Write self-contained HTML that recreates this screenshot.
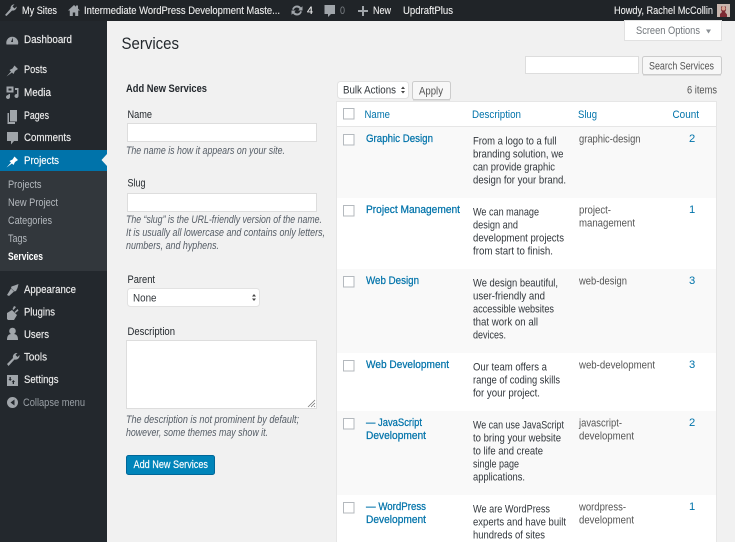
<!DOCTYPE html>
<html><head><meta charset="utf-8"><title>Services</title>
<style>
html,body{margin:0;padding:0;width:735px;height:542px;overflow:hidden;background:#f1f1f1}
svg{display:block;filter:blur(.3px)}
text{font-family:"Liberation Sans",sans-serif;font-size:11.2px;fill:#444}
.b{fill:#eee;font-size:11.2px;stroke:#eee;stroke-width:.12}
.m{fill:#eee;font-size:11.2px;stroke:#eee;stroke-width:.15}
.s{fill:#b4b9be;font-size:11px}
.h{fill:#0073aa;font-size:11.2px}
.n{fill:#0073aa;font-size:11.2px;stroke:#0073aa;stroke-width:.25}
.d{fill:#32373c;font-size:11.2px}
.sl{fill:#555;font-size:11.2px}
.l{fill:#23282d;font-size:11.2px}
.i{fill:#555d66;font-size:11px;font-style:italic}
.g{fill:#a0a5aa}
</style></head><body>
<svg width="735" height="542" viewBox="0 0 735 542" xmlns="http://www.w3.org/2000/svg">
<rect width="735" height="542" fill="#f1f1f1"/>
<rect width="107" height="542" fill="#23282d"/>
<rect y="171" width="107" height="100" fill="#32373c"/>
<rect y="150" width="107" height="21" fill="#0073aa"/>
<path d="M107 154l-5.500 6 5.500 6z" fill="#f1f1f1"/>
<rect width="735" height="21" fill="#202428"/>

<g class="g">
<path d="M5 15l5.500-6.200a4 4 0 0 1 4-4.600l-2 2.300 2 2 2.300-2a4 4 0 0 1-4.700 4l-5.600 5.500z"/>
<path d="M68 10.500l6-5.500 2 1.800V5.500h2v3.100l2 1.900h-1.800V16h-3v-3.500h-2.400V16h-3v-5.500z"/>
<path d="M297 5.500a5 5 0 0 1 4 2l1.500-1.300v4.300h-4.300l1.400-1.500a3.200 3.200 0 0 0-5.800.9l-1.700-.4a5 5 0 0 1 4.900-4zM297 15.500a5 5 0 0 1-4-2l-1.500 1.300v-4.300h4.300l-1.400 1.500a3.200 3.200 0 0 0 5.800-.9l1.700.4a5 5 0 0 1-4.900 4z"/>
<path d="M324.500 5h10.500v9h-4l-3 3v-3h-3.500z"/>
<path d="M362 6h2v4h4v2h-4v4h-2v-4h-4v-2h4z"/>
</g>
<text lengthAdjust="spacingAndGlyphs" class="b" x="22" y="14" textLength="35">My Sites</text>
<text lengthAdjust="spacingAndGlyphs" class="b" x="84" y="14" textLength="196">Intermediate WordPress Development Maste...</text>
<text lengthAdjust="spacingAndGlyphs" class="b" x="307" y="14" textLength="6">4</text>
<text lengthAdjust="spacingAndGlyphs" x="340" y="14" textLength="5" style="fill:#7c8186">0</text>
<text lengthAdjust="spacingAndGlyphs" class="b" x="373" y="14" textLength="18">New</text>
<text lengthAdjust="spacingAndGlyphs" class="b" x="403" y="14" textLength="50">UpdraftPlus</text>
<text lengthAdjust="spacingAndGlyphs" class="b" x="614" y="14" textLength="99">Howdy, Rachel McCollin</text>
<rect x="717" y="4" width="13" height="13" fill="#c9b6ae"/>
<path d="M720 17v-3l2-2-1-2v-3.500h5V10l-1 2 2 2.500V17z" fill="#7d2a33"/>
<circle cx="723.500" cy="8.500" r="2" fill="#d9a593"/>

<g class="g">
<path fill-rule="evenodd" d="M6.500 44.500a6 6 0 1 1 11.500 0zM12.800 37.500l-1.800 4.500h2z"/>
<path d="M6.500 76.500l4.500-5-1.500-1.500 3-1.500 2-3 3.500 3.500-3 2-1.500 3-1.500-1.500z"/>
<path fill-rule="evenodd" d="M6.500 86.500h7v6h-7zM8.500 88.500v2h3v-2zM15 88h3.500v8a2 2 0 1 1-1.500-1.900V90h-2zM8.500 94h1.500v3a2 2 0 1 1-1.500-1.900z"/>
<path d="M10 110h7v11.500h-7z"/><path d="M7.500 113H9v9h6v2H7.500z"/>
<path d="M7 132h11v9h-4l-3 3.500V141H7z"/>
<path d="M7 295l4-6.500 3 3-5 4.500zM11.500 286.500l3-1 4-1.500-1 4-1.500 3-1.500.5-3.500-3.500z"/>
<path d="M7 319v-6l5-3 5 5-3 5h-6zM14 306l2 1-2.500 3-1-1zM17.500 309l1 1.500-3 2.500-1-1z"/>
<circle cx="12.500" cy="331" r="3.300"/><path d="M7 340c0-6 3-6 5.500-6s5.500 0 5.500 6z"/>
<path d="M7 364l6-6a4 4 0 0 1 4.500-5l-2 2 2 2 2-2a4 4 0 0 1-5 4.500l-6 6.500z"/>
<path fill-rule="evenodd" d="M7 375h11v11H7zM9.500 377v2H8.500l1.700 2 1.600-2h-1v-2zM14 384v-2h1l-1.600-2-1.700 2h1v2z"/>
<path fill-rule="evenodd" d="M12.500 397a5.500 5.500 0 1 1 0 11 5.500 5.500 0 0 1 0-11zM14.500 399.500l-4 3 4 3z"/>
</g>
<path d="M6.500 167.500l4.500-5-1.500-1.500 3-1.500 2-3 3.500 3.500-3 2-1.500 3-1.500-1.500z" fill="#fff"/>

<text lengthAdjust="spacingAndGlyphs" class="m" x="24" y="43" textLength="48">Dashboard</text>
<text lengthAdjust="spacingAndGlyphs" class="m" x="24" y="73" textLength="23">Posts</text>
<text lengthAdjust="spacingAndGlyphs" class="m" x="24" y="96" textLength="27">Media</text>
<text lengthAdjust="spacingAndGlyphs" class="m" x="24" y="119" textLength="25">Pages</text>
<text lengthAdjust="spacingAndGlyphs" class="m" x="24" y="141" textLength="47">Comments</text>
<text lengthAdjust="spacingAndGlyphs" class="m" x="24" y="164" textLength="35" style="fill:#fff;stroke:#fff">Projects</text>
<text lengthAdjust="spacingAndGlyphs" class="s" x="8" y="188" textLength="33.500">Projects</text>
<text lengthAdjust="spacingAndGlyphs" class="s" x="8" y="206" textLength="50">New Project</text>
<text lengthAdjust="spacingAndGlyphs" class="s" x="8" y="224" textLength="44">Categories</text>
<text lengthAdjust="spacingAndGlyphs" class="s" x="8" y="242" textLength="19">Tags</text>
<text lengthAdjust="spacingAndGlyphs" x="8" y="260" textLength="35" style="fill:#fff;font-size:10.8px;font-weight:bold">Services</text>
<text lengthAdjust="spacingAndGlyphs" class="m" x="24" y="293" textLength="52">Appearance</text>
<text lengthAdjust="spacingAndGlyphs" class="m" x="24" y="315.500" textLength="31">Plugins</text>
<text lengthAdjust="spacingAndGlyphs" class="m" x="24" y="338" textLength="25">Users</text>
<text lengthAdjust="spacingAndGlyphs" class="m" x="24" y="360.500" textLength="23">Tools</text>
<text lengthAdjust="spacingAndGlyphs" class="m" x="24" y="383" textLength="34.500">Settings</text>
<text lengthAdjust="spacingAndGlyphs" x="23" y="406" textLength="62" style="fill:#9aa0a6;font-size:11px">Collapse menu</text>

<rect x="624.500" y="20.500" width="97" height="20" fill="#fff" stroke="#e1e1e1"/>
<text lengthAdjust="spacingAndGlyphs" x="636" y="34" textLength="64" style="fill:#72777c;font-size:11px">Screen Options</text>
<path d="M706 29.500h5l-2.500 4z" fill="#8a8f94"/>

<text lengthAdjust="spacingAndGlyphs" x="121.500" y="49" textLength="57.500" style="fill:#23282d;font-size:16.500px">Services</text>

<rect x="525.500" y="56.500" width="113" height="17" fill="#fff" stroke="#ddd"/>
<rect x="642.500" y="56.500" width="79" height="18" rx="2" fill="#f7f7f7" stroke="#ccc"/>
<path d="M643 75h78" stroke="#ccc"/>
<text lengthAdjust="spacingAndGlyphs" x="649" y="69.500" textLength="65" style="fill:#555;font-size:11px">Search Services</text>

<rect x="337.500" y="81.500" width="71" height="17" rx="3" fill="#fff" stroke="#e2e2e2"/>
<text lengthAdjust="spacingAndGlyphs" x="343" y="93.500" textLength="53" style="fill:#32373c;font-size:11px">Bulk Actions</text>
<path d="M401 89l2-2.500 2 2.500zM401 91l2 2.500 2-2.500z" fill="#444"/>
<rect x="412.500" y="81.500" width="38" height="18" rx="2" fill="#f7f7f7" stroke="#ccc"/>
<path d="M413 100h37" stroke="#ccc"/>
<text lengthAdjust="spacingAndGlyphs" x="419" y="94.500" textLength="24" style="fill:#555;font-size:11px">Apply</text>
<text lengthAdjust="spacingAndGlyphs" x="687" y="93.500" textLength="30" style="fill:#555;font-size:11px">6 items</text>

<text lengthAdjust="spacingAndGlyphs" x="126" y="92" textLength="81" style="fill:#23282d;font-size:11px;font-weight:bold">Add New Services</text>
<text lengthAdjust="spacingAndGlyphs" class="l" x="127.500" y="118" textLength="24.500">Name</text>
<rect x="127.500" y="123.500" width="189" height="18" fill="#fff" stroke="#ddd"/>
<text lengthAdjust="spacingAndGlyphs" class="i" x="126" y="154" textLength="159">The name is how it appears on your site.</text>
<text lengthAdjust="spacingAndGlyphs" class="l" x="127.500" y="186.500" textLength="18">Slug</text>
<rect x="127.500" y="193.500" width="189" height="18" fill="#fff" stroke="#ddd"/>
<text lengthAdjust="spacingAndGlyphs" class="i" x="126" y="223" textLength="196">The “slug” is the URL-friendly version of the name.</text>
<text lengthAdjust="spacingAndGlyphs" class="i" x="126" y="236" textLength="199">It is usually all lowercase and contains only letters,</text>
<text lengthAdjust="spacingAndGlyphs" class="i" x="126" y="249" textLength="93">numbers, and hyphens.</text>
<text lengthAdjust="spacingAndGlyphs" class="l" x="127.500" y="283" textLength="27.500">Parent</text>
<rect x="127.500" y="288.500" width="132" height="18" rx="3" fill="#fff" stroke="#e2e2e2"/>
<text lengthAdjust="spacingAndGlyphs" x="133" y="301.500" textLength="23.500" style="fill:#32373c;font-size:11.2px">None</text>
<path d="M252 296.500l2-2.500 2 2.500zM252 298.500l2 2.500 2-2.500z" fill="#444"/>
<text lengthAdjust="spacingAndGlyphs" class="l" x="127.500" y="335" textLength="47.500">Description</text>
<rect x="126.500" y="340.500" width="190" height="68" fill="#fff" stroke="#ddd"/>
<path d="M308 407l7-7M311 407l4-4M314 407l1-1" stroke="#777" stroke-width=".8"/>
<text lengthAdjust="spacingAndGlyphs" class="i" x="126" y="423" textLength="173">The description is not prominent by default;</text>
<text lengthAdjust="spacingAndGlyphs" class="i" x="126" y="436" textLength="142">however, some themes may show it.</text>
<rect x="126.500" y="455.500" width="88" height="19" rx="2" fill="#0085ba" stroke="#006799"/>
<text lengthAdjust="spacingAndGlyphs" x="133.500" y="468" textLength="74.500" style="fill:#fff;font-size:11px;stroke:#fff;stroke-width:.15">Add New Services</text>

<rect x="336" y="101" width="381" height="441" fill="#e6e6e6"/>
<rect x="337" y="102" width="379" height="24" fill="#fff"/>
<rect x="337" y="127" width="379" height="71" fill="#f9f9f9"/>
<rect x="337" y="198" width="379" height="71" fill="#fff"/>
<rect x="337" y="269" width="379" height="84" fill="#f9f9f9"/>
<rect x="337" y="353" width="379" height="58" fill="#fff"/>
<rect x="337" y="411" width="379" height="84" fill="#f9f9f9"/>
<rect x="337" y="495" width="379" height="47" fill="#fff"/>
<g fill="#fff" stroke="#b4b9be">
<rect x="343.500" y="108.500" width="10.500" height="10.500"/>
<rect x="343.500" y="134.500" width="10.500" height="10.500"/>
<rect x="343.500" y="205.500" width="10.500" height="10.500"/>
<rect x="343.500" y="276.500" width="10.500" height="10.500"/>
<rect x="343.500" y="360.500" width="10.500" height="10.500"/>
<rect x="343.500" y="418.500" width="10.500" height="10.500"/>
<rect x="343.500" y="502.500" width="10.500" height="10.500"/>
</g>
<text lengthAdjust="spacingAndGlyphs" class="h" x="364.500" y="118" textLength="25.500">Name</text>
<text lengthAdjust="spacingAndGlyphs" class="h" x="472" y="118" textLength="49">Description</text>
<text lengthAdjust="spacingAndGlyphs" class="h" x="578" y="118" textLength="19">Slug</text>
<text lengthAdjust="spacingAndGlyphs" class="h" x="672.500" y="118" textLength="26.500">Count</text>

<text lengthAdjust="spacingAndGlyphs" class="n" x="366" y="142" textLength="67">Graphic Design</text>
<text lengthAdjust="spacingAndGlyphs" class="n" x="366" y="213" textLength="94">Project Management</text>
<text lengthAdjust="spacingAndGlyphs" class="n" x="366" y="284" textLength="53">Web Design</text>
<text lengthAdjust="spacingAndGlyphs" class="n" x="366" y="368" textLength="83">Web Development</text>
<text lengthAdjust="spacingAndGlyphs" class="n" x="366" y="426" textLength="56">— JavaScript</text>
<text lengthAdjust="spacingAndGlyphs" class="n" x="366" y="439" textLength="60">Development</text>
<text lengthAdjust="spacingAndGlyphs" class="n" x="366" y="510" textLength="60">— WordPress</text>
<text lengthAdjust="spacingAndGlyphs" class="n" x="366" y="523" textLength="60">Development</text>

<text lengthAdjust="spacingAndGlyphs" class="d" x="473" y="144.500" textLength="83.500">From a logo to a full</text>
<text lengthAdjust="spacingAndGlyphs" class="d" x="473" y="157.500" textLength="90.500">branding solution, we</text>
<text lengthAdjust="spacingAndGlyphs" class="d" x="473" y="170.500" textLength="82">can provide graphic</text>
<text lengthAdjust="spacingAndGlyphs" class="d" x="473" y="183.500" textLength="93">design for your brand.</text>
<text lengthAdjust="spacingAndGlyphs" class="d" x="473" y="215.500" textLength="66">We can manage</text>
<text lengthAdjust="spacingAndGlyphs" class="d" x="473" y="228.500" textLength="45">design and</text>
<text lengthAdjust="spacingAndGlyphs" class="d" x="473" y="241.500" textLength="91">development projects</text>
<text lengthAdjust="spacingAndGlyphs" class="d" x="473" y="254.500" textLength="80">from start to finish.</text>
<text lengthAdjust="spacingAndGlyphs" class="d" x="473" y="286.500" textLength="85">We design beautiful,</text>
<text lengthAdjust="spacingAndGlyphs" class="d" x="473" y="299.500" textLength="72">user-friendly and</text>
<text lengthAdjust="spacingAndGlyphs" class="d" x="473" y="312.500" textLength="81">accessible websites</text>
<text lengthAdjust="spacingAndGlyphs" class="d" x="473" y="325.500" textLength="65">that work on all</text>
<text lengthAdjust="spacingAndGlyphs" class="d" x="473" y="338.500" textLength="33">devices.</text>
<text lengthAdjust="spacingAndGlyphs" class="d" x="473" y="370.500" textLength="74">Our team offers a</text>
<text lengthAdjust="spacingAndGlyphs" class="d" x="473" y="383.500" textLength="87">range of coding skills</text>
<text lengthAdjust="spacingAndGlyphs" class="d" x="473" y="396.500" textLength="67">for your project.</text>
<text lengthAdjust="spacingAndGlyphs" class="d" x="473" y="428.500" textLength="91">We can use JavaScript</text>
<text lengthAdjust="spacingAndGlyphs" class="d" x="473" y="441.500" textLength="88">to bring your website</text>
<text lengthAdjust="spacingAndGlyphs" class="d" x="473" y="454.500" textLength="70">to life and create</text>
<text lengthAdjust="spacingAndGlyphs" class="d" x="473" y="467.500" textLength="46">single page</text>
<text lengthAdjust="spacingAndGlyphs" class="d" x="473" y="480.500" textLength="52">applications.</text>
<text lengthAdjust="spacingAndGlyphs" class="d" x="473" y="512.500" textLength="77">We are WordPress</text>
<text lengthAdjust="spacingAndGlyphs" class="d" x="473" y="525.500" textLength="93">experts and have built</text>
<text lengthAdjust="spacingAndGlyphs" class="d" x="473" y="538.500" textLength="72">hundreds of sites</text>

<text lengthAdjust="spacingAndGlyphs" class="sl" x="579" y="142.500" textLength="61.500">graphic-design</text>
<text lengthAdjust="spacingAndGlyphs" class="sl" x="579" y="213.500" textLength="32">project-</text>
<text lengthAdjust="spacingAndGlyphs" class="sl" x="579" y="226.500" textLength="56">management</text>
<text lengthAdjust="spacingAndGlyphs" class="sl" x="579" y="284.500" textLength="48">web-design</text>
<text lengthAdjust="spacingAndGlyphs" class="sl" x="579" y="368.500" textLength="76">web-development</text>
<text lengthAdjust="spacingAndGlyphs" class="sl" x="579" y="426.500" textLength="43">javascript-</text>
<text lengthAdjust="spacingAndGlyphs" class="sl" x="579" y="439.500" textLength="55">development</text>
<text lengthAdjust="spacingAndGlyphs" class="sl" x="579" y="510.500" textLength="47">wordpress-</text>
<text lengthAdjust="spacingAndGlyphs" class="sl" x="579" y="523.500" textLength="55">development</text>

<text class="h" x="689" y="142">2</text>
<text class="h" x="689" y="213">1</text>
<text class="h" x="689" y="284">3</text>
<text class="h" x="689" y="368">3</text>
<text class="h" x="689" y="426">2</text>
<text class="h" x="689" y="510">1</text>
</svg>
</body></html>
